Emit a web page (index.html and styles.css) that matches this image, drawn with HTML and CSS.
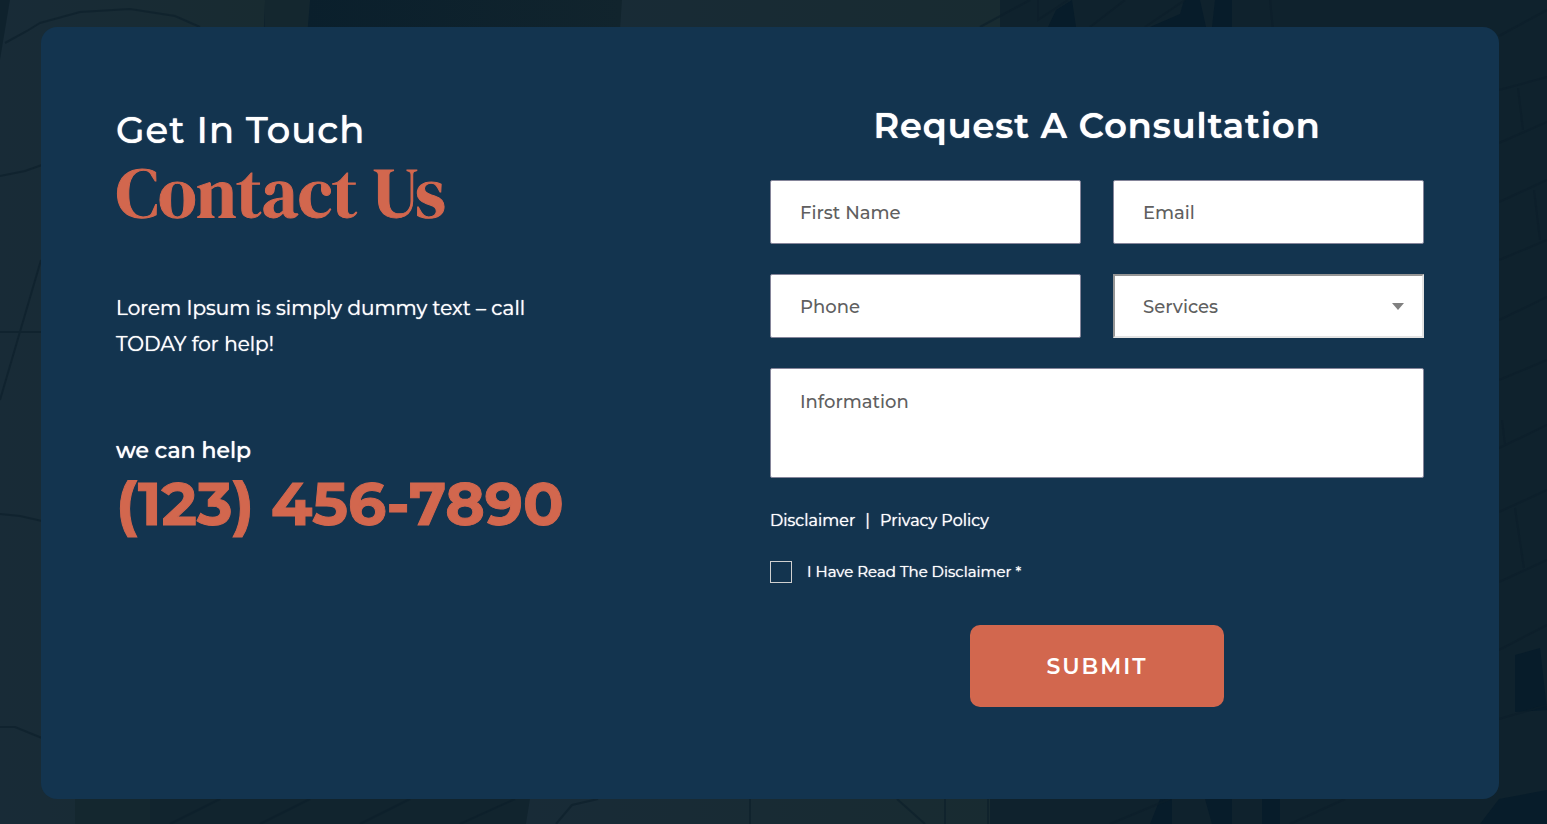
FILE: index.html
```html
<!DOCTYPE html>
<html lang="en">
<head>
    <meta charset="UTF-8">
    <meta name="viewport" content="width=device-width, initial-scale=1.0">
    <title>Contact Us</title>
    <link rel="stylesheet" href="styles.css">
</head>
<body>
    <section class="contact">
        <!-- stone wall backdrop -->
        <svg class="backdrop" viewBox="0 0 1547 824" preserveAspectRatio="none" aria-hidden="true">
            <defs>
                <linearGradient id="stone" x1="0" x2="1">
                    <stop offset="0" stop-color="#182b37"/>
                    <stop offset="1" stop-color="#182b31"/>
                </linearGradient>
                <linearGradient id="shade" x1="0" x2="1">
                    <stop offset="0" stop-color="#0a1f2c"/>
                    <stop offset="1" stop-color="#11242d"/>
                </linearGradient>
            </defs>
            <rect width="1547" height="824" fill="#0f222d"/>
            <path fill="url(#stone)" d="M10 0H265L230 824H0V60Z"/>
            <path fill="#14272f" d="M265 0H310V60H265ZM75 799H180L150 824H75Z"/>
            <path fill="url(#shade)" d="M310 0H622L618 60H305Z"/>
            <path fill="#11242e" d="M150 799H530V824H150Z"/>
            <path fill="url(#stone)" d="M622 0H1000V60H618ZM530 799H990V824H526Z"/>
            <path fill="#071c2a" d="M1048 27L1056 10 1072 0 1076 27ZM1150 27L1180 14 1184 0H1200L1206 27ZM1215 0H1232V27H1212ZM1160 799H1172V824H1150ZM1205 799H1232V824H1212ZM1262 799H1280V824H1262ZM1515 655L1540 648L1547 710L1515 712ZM1499 799L1547 790V824H1480Z"/>
            <g class="cracks">
                <path d="M5 43L27 31 40 23 80 12 130 9 175 16 200 27M0 176L25 171 42 165M0 332H42M0 514L20 516 42 521M0 727H15L42 738M41 260L0 400"/>
                <path d="M170 824L220 799M260 824L310 799M360 824L410 799M460 824L515 799M556 824L572 805 598 799M897 799L925 824M945 799V824M988 799V824M750 799V824M1110 824L1170 799M1290 824L1345 799"/>
                <path d="M980 27L1030 0M1038 0V20L1068 0M1090 27L1125 0M1145 27L1185 0M1270 0L1273 30M1499 36L1547 10M1499 90L1547 77M1499 143L1547 122M1499 202L1547 180M1499 260L1547 240M1499 320L1547 297M1499 380L1547 360M1499 448L1547 425M1499 512L1547 490M1499 582L1547 560M1499 650L1547 625M1499 719L1547 705M1518 88L1523 130M1534 190L1540 240M1502 420L1505 445M1515 508L1524 568"/>
            </g>
        </svg>

        <div class="card">
            <div class="intro">
                <h2 class="title">
                    <span class="title-small">Get In Touch</span>
                    <span class="title-big">Contact Us</span>
                </h2>
                <p class="text">Lorem Ipsum is simply dummy text – call TODAY for help!</p>
                <p class="help">we can help</p>
                <a class="phone" href="tel:1234567890">(123) 456-7890</a>
            </div>

            <form class="form">
                <h3 class="form-title">Request A Consultation</h3>
                <div class="fields">
                    <input class="field" type="text" name="first-name" placeholder="First Name" aria-label="First Name">
                    <input class="field" type="email" name="email" placeholder="Email" aria-label="Email">
                    <input class="field" type="tel" name="phone" placeholder="Phone" aria-label="Phone">
                    <div class="select-wrap">
                        <select class="field select" name="services" aria-label="Services">
                            <option>Services</option>
                        </select>
                        <svg class="arrow" viewBox="0 0 12 7" aria-hidden="true"><path d="M0 0H12L6 7Z"/></svg>
                    </div>
                    <textarea class="field message" name="information" placeholder="Information" aria-label="Information"></textarea>
                </div>
                <div class="links">
                    <a href="#">Disclaimer</a>
                    <span>|</span>
                    <a href="#">Privacy Policy</a>
                </div>
                <label class="agree">
                    <input class="checkbox" type="checkbox" name="agree">
                    I Have Read The Disclaimer *
                </label>
                <button class="submit" type="submit">SUBMIT</button>
            </form>
        </div>
    </section>
</body>
</html>
```

FILE: styles.css
```css
* {
    box-sizing: border-box;
}
body {
    margin: 0;
    font-family: Montserrat, Inter, "Liberation Sans", sans-serif;
    font-weight: 500;
    color: #fff;
    background: #0f222d;
}
.contact {
    position: relative;
    min-height: 100vh;
    padding: 27px 48px 25px 41px;
}
.backdrop {
    position: absolute;
    inset: 0;
    width: 100%;
    height: 100%;
}
.cracks {
    fill: none;
    stroke: #0b1e29;
    stroke-width: 2;
    opacity: 0.6;
}
.card {
    position: relative;
    display: grid;
    grid-template-columns: 1fr 1fr;
    padding: 76px 75px 92px;
    border-radius: 16px;
    background: #13344f;
}
.title {
    margin: 0;
}
.title-small,
.title-big {
    display: block;
}
.title-small {
    font-size: 37px;
    line-height: 54px;
    font-weight: 500;
    letter-spacing: 1px;
    text-shadow: 0 0 1px #fff;
}
.title-big {
    font-family: "DM Serif Display", "Liberation Serif", serif;
    font-size: 70px;
    line-height: 70px;
    font-weight: 400;
    color: #d2674e;
    -webkit-text-stroke: 1px #d2674e;
}
.text {
    max-width: 440px;
    margin: 63px 0 0;
    font-size: 20px;
    line-height: 36px;
}
.text,
.links,
.agree {
    font-weight: 400;
    text-shadow: 0 0 1px #fff;
}
.help {
    margin: 72px 0 0;
    font-size: 22px;
    line-height: 34px;
    font-weight: 500;
    text-shadow: 0 0 1px #fff;
}
.phone {
    display: block;
    font-size: 60px;
    line-height: 72px;
    font-weight: 700;
    color: #d2674e;
    text-decoration: none;
    -webkit-text-stroke: 1px #d2674e;
}
.form {
    display: flex;
    flex-direction: column;
}
.form-title {
    margin: 0 0 31px;
    font-size: 35px;
    line-height: 46px;
    font-weight: 600;
    letter-spacing: 1px;
    text-align: center;
    text-shadow: 0 0 1px #fff;
}
.fields {
    display: grid;
    grid-template-columns: 1fr 1fr;
    gap: 30px 32px;
}
.field {
    width: 100%;
    height: 64px;
    padding: 2px 29px 0;
    border: 1px solid #85859a;
    border-radius: 2px;
    background: #fff;
    color: #606060;
    font: inherit;
    font-size: 18px;
}
.field::placeholder {
    color: #606060;
    opacity: 1;
}
.select-wrap {
    position: relative;
}
.select {
    display: block;
    padding: 2px 28px 0;
    border: 2px solid;
    border-color: #959595 #e3e3e3 #e3e3e3 #959595;
    border-radius: 0;
    appearance: none;
}
.arrow {
    position: absolute;
    top: 29px;
    right: 20px;
    width: 12px;
    height: 7px;
    fill: #808080;
    pointer-events: none;
}
.message {
    display: block;
    grid-column: 1 / -1;
    height: 110px;
    padding: 21px 29px;
    line-height: 24px;
    resize: none;
}
.links {
    display: flex;
    gap: 10px;
    margin-top: 31px;
    font-size: 16px;
    line-height: 24px;
}
.links a {
    color: #fff;
    text-decoration: none;
}
.agree {
    display: flex;
    align-items: center;
    gap: 15px;
    margin-top: 28px;
    font-size: 15px;
    line-height: 22px;
}
.checkbox {
    width: 22px;
    height: 22px;
    margin: 0;
    border: 1px solid #d0d0d0;
    appearance: none;
}
.checkbox:checked {
    background: #d2674e;
}
.submit {
    align-self: center;
    margin-top: 42px;
    padding: 27px 76px 25px;
    border: none;
    border-radius: 10px;
    background: #d2674e;
    color: #fff;
    font: inherit;
    font-size: 22px;
    line-height: 30px;
    font-weight: 600;
    letter-spacing: 2px;
    cursor: pointer;
}
```
